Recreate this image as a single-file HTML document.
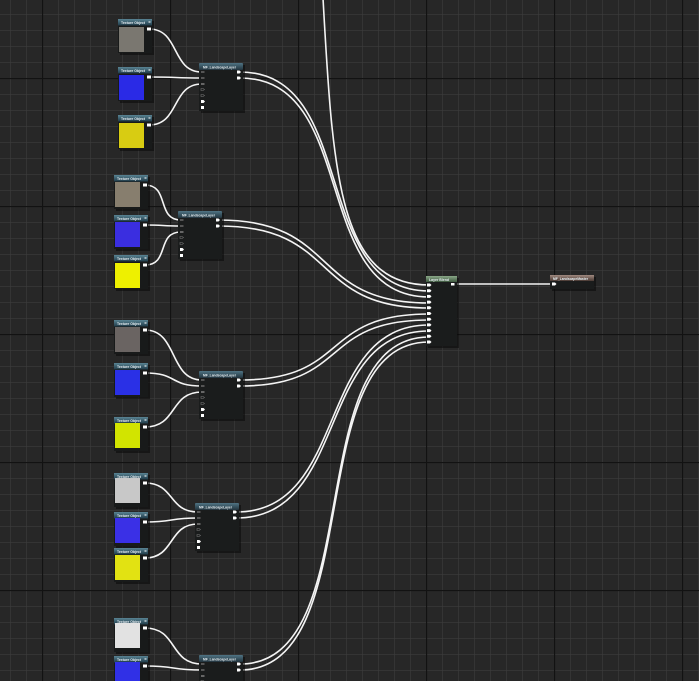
<!DOCTYPE html>
<html><head><meta charset="utf-8"><style>
html,body{margin:0;padding:0;background:#262626;overflow:hidden}
svg{display:block}
text{font-family:"Liberation Sans",sans-serif;fill:#e8f0f4;font-weight:bold}
</style></head><body>
<svg width="699" height="681" viewBox="0 0 699 681" xmlns="http://www.w3.org/2000/svg">
<defs>
<pattern id="mn" x="10" y="14" width="16" height="16" patternUnits="userSpaceOnUse">
<path d="M0 0V16M0 0H16" stroke="#3c3c3c" stroke-width="1.2" fill="none"/></pattern>
<pattern id="mj" x="42" y="78" width="128" height="128" patternUnits="userSpaceOnUse">
<path d="M0.5 0V128M0 0.5H128" stroke="#121212" stroke-width="1.3" fill="none"/></pattern>
<linearGradient id="th" x1="0" y1="0" x2="0" y2="1"><stop offset="0" stop-color="#5a8494"/><stop offset="1" stop-color="#1f3a48"/></linearGradient>
<linearGradient id="lh" x1="0" y1="0" x2="0" y2="1"><stop offset="0" stop-color="#4f7484"/><stop offset="1" stop-color="#22343e"/></linearGradient>
<linearGradient id="gh" x1="0" y1="0" x2="0" y2="1"><stop offset="0" stop-color="#8aa888"/><stop offset="1" stop-color="#3f5a40"/></linearGradient>
<linearGradient id="bh" x1="0" y1="0" x2="0" y2="1"><stop offset="0" stop-color="#a08a80"/><stop offset="1" stop-color="#4a3a34"/></linearGradient>
<g id="tex"><rect x="2" y="2" width="34" height="34" fill="#0c0c0c" opacity=".6"/><rect x="0" y="0" width="34" height="6.5" fill="url(#th)"/><rect x="0" y="6.5" width="34" height="27.5" fill="#181a1a"/><rect x="29" y="8.5" width="4" height="3" fill="#fff"/><text x="3" y="5" font-size="4" textLength="24" lengthAdjust="spacingAndGlyphs">Texture Object</text><rect x="30.5" y="2.5" width="2" height="1" fill="#fff"/></g>
<g id="lay"><rect x="2" y="2" width="44" height="48" fill="#0c0c0c" opacity=".6"/><rect x="0" y="0" width="44" height="7" fill="url(#lh)" rx="1"/><rect x="0" y="7" width="44" height="41" fill="#1a1c1c"/><text x="4" y="5.3" font-size="4" textLength="33" lengthAdjust="spacingAndGlyphs">MF_LandscapeLayer</text>
<rect x="2" y="8" width="3.5" height="2" fill="#555"/><rect x="2" y="14" width="3.5" height="2" fill="#555"/><rect x="2" y="20" width="3.5" height="2" fill="#666"/>
<path d="M2 25.5h2l1.5 1-1.5 1h-2z" fill="none" stroke="#777" stroke-width=".6"/><path d="M2 31.5h2l1.5 1-1.5 1h-2z" fill="none" stroke="#777" stroke-width=".6"/>
<path d="M2 37h2.5l1.5 1.5-1.5 1.5h-2.5z" fill="#fff"/><rect x="2" y="43" width="3" height="3" fill="#fff"/>
<path d="M38 7.5h2.5l1.5 1.5-1.5 1.5h-2.5z" fill="#fff"/><path d="M38 13.5h2.5l1.5 1.5-1.5 1.5h-2.5z" fill="#fff"/></g>
</defs>
<rect width="699" height="681" fill="#272727"/>
<rect width="699" height="681" fill="url(#mn)"/>
<rect width="699" height="681" fill="url(#mj)"/>

<g fill="none" stroke="#f4f4f4" stroke-width="1.6">
<path d="M323 -2C333 180 340 285 429 285"/>
<path d="M149 29C180 29 171 72 202 72"/><path d="M149 77C180 77 171 78 202 78"/><path d="M149 125C180 125 171 84 202 84"/>
<path d="M240 72C360 72 309 291 429 291"/><path d="M240 78C360 78 309 297 429 297"/>
<path d="M145 185C170 185 156 220 181 220"/><path d="M145 225C165 225 161 226 181 226"/><path d="M145 265C170 265 156 232 181 232"/>
<path d="M219 220C340 220 309 303 429 303"/><path d="M219 226C340 226 309 308 429 308"/>
<path d="M145 330C178 330 169 380 202 380"/><path d="M145 373C178 373 169 386 202 386"/><path d="M145 427C178 427 169 392 202 392"/>
<path d="M240 380C350 380 319 314 429 314"/><path d="M240 386C350 386 319 320 429 320"/>
<path d="M145 483C175 483 168 512 198 512"/><path d="M145 522C175 522 168 518 198 518"/><path d="M145 558C175 558 168 524 198 524"/>
<path d="M236 512C350 512 315 325 429 325"/><path d="M236 518C350 518 315 331 429 331"/>
<path d="M145 628C178 628 169 664 202 664"/><path d="M145 666C178 666 169 670 202 670"/>
<path d="M240 664C370 664 299 337 429 337"/><path d="M240 670C370 670 299 342 429 342"/>
<path d="M455 284H554"/>
</g>

<use href="#tex" x="118" y="19"/><rect x="119" y="27" width="25" height="25" fill="#7a7770"/>
<use href="#tex" x="118" y="67"/><rect x="119" y="75" width="25" height="25" fill="#2a2ae6"/>
<use href="#tex" x="118" y="115"/><rect x="119" y="123" width="25" height="25" fill="#d8cc12"/>
<use href="#lay" x="199" y="63"/>
<use href="#tex" x="114" y="175"/><rect x="115" y="182" width="25" height="25" fill="#877e6e"/>
<use href="#tex" x="114" y="215"/><rect x="115" y="222" width="25" height="25" fill="#3a2ee0"/>
<use href="#tex" x="114" y="255"/><rect x="115" y="263" width="25" height="25" fill="#eef000"/>
<use href="#lay" x="178" y="211"/>
<use href="#tex" x="114" y="320"/><rect x="115" y="327" width="25" height="25" fill="#6a6462"/>
<use href="#tex" x="114" y="363"/><rect x="115" y="370" width="25" height="25" fill="#2a30e6"/>
<use href="#tex" x="114" y="417"/><rect x="115" y="423" width="25" height="25" fill="#d2e400"/>
<use href="#lay" x="199" y="371"/>
<use href="#tex" x="114" y="473"/><rect x="115" y="478" width="25" height="25" fill="#c8c8c8"/>
<use href="#tex" x="114" y="512"/><rect x="115" y="518" width="25" height="25" fill="#3a30e6"/>
<use href="#tex" x="114" y="548"/><rect x="115" y="555" width="25" height="25" fill="#e2e212"/>
<use href="#lay" x="195" y="503"/>
<use href="#tex" x="114" y="618"/><rect x="115" y="623" width="25" height="25" fill="#e2e2e2"/>
<use href="#tex" x="114" y="656"/><rect x="115" y="662" width="25" height="25" fill="#3030e6"/>
<use href="#lay" x="199" y="655"/>

<rect x="428" y="278" width="31" height="70" fill="#0c0c0c" opacity=".6"/>
<rect x="426" y="276" width="31" height="6" fill="url(#gh)"/>
<rect x="426" y="282" width="31" height="64" fill="#1a1c1c"/>
<text x="429" y="281" font-size="4" textLength="20" lengthAdjust="spacingAndGlyphs">Layer Blend</text>
<g fill="#fff">
<path d="M427 283.5h3l1.5 1.5-1.5 1.5h-3z"/><path d="M427 289.2h3l1.5 1.5-1.5 1.5h-3z"/><path d="M427 294.9h3l1.5 1.5-1.5 1.5h-3z"/><path d="M427 300.6h3l1.5 1.5-1.5 1.5h-3z"/><path d="M427 306.3h3l1.5 1.5-1.5 1.5h-3z"/><path d="M427 312h3l1.5 1.5-1.5 1.5h-3z"/><path d="M427 317.7h3l1.5 1.5-1.5 1.5h-3z"/><path d="M427 323.4h3l1.5 1.5-1.5 1.5h-3z"/><path d="M427 329.1h3l1.5 1.5-1.5 1.5h-3z"/><path d="M427 334.8h3l1.5 1.5-1.5 1.5h-3z"/><path d="M427 340.5h3l1.5 1.5-1.5 1.5h-3z"/>
<rect x="451" y="283" width="3.5" height="2.5"/>
</g>
<rect x="552" y="277" width="44" height="14" fill="#0c0c0c" opacity=".6"/>
<rect x="550" y="275" width="44" height="6" fill="url(#bh)"/>
<rect x="550" y="281" width="44" height="8" fill="#1a1c1c"/>
<text x="553" y="280" font-size="4" textLength="35" lengthAdjust="spacingAndGlyphs">MF_LandscapeMaster</text>
<path d="M552 282.5h3l1.5 1.5-1.5 1.5h-3z" fill="#fff"/>
</svg>
</body></html>
